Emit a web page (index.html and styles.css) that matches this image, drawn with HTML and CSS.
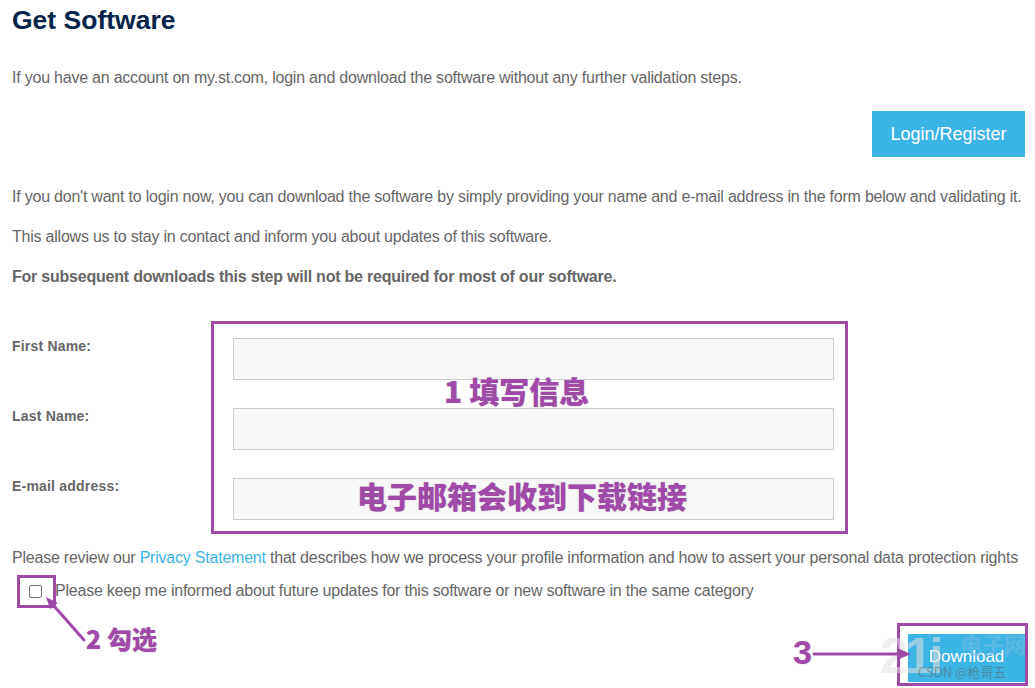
FILE: index.html
```html
<!DOCTYPE html>
<html>
<head>
<meta charset="utf-8">
<link rel="stylesheet" href="styles.css">
</head>
<body>
<div class="page">
  <h1 class="title">Get Software</h1>
  <p class="text p1">If you have an account on my.st.com, login and download the software without any further validation steps.</p>
  <div class="login-row"><button class="btn login">Login/Register</button></div>
  <p class="text p2">If you don't want to login now, you can download the software by simply providing your name and e-mail address in the form below and validating it.</p>
  <p class="text p3">This allows us to stay in contact and inform you about updates of this software.</p>
  <p class="text bold">For subsequent downloads this step will not be required for most of our software.</p>

  <div class="form">
    <div class="note-box box1"></div>
    <div class="note n1">1 填写信息</div>
    <div class="note n2">电子邮箱会收到下载链接</div>
    <div class="row"><label class="lbl">First Name:</label><div class="input"></div></div>
    <div class="row"><label class="lbl">Last Name:</label><div class="input"></div></div>
    <div class="row"><label class="lbl">E-mail address:</label><div class="input"></div></div>
  </div>

  <p class="text privacy">Please review our <a class="link">Privacy Statement</a> that describes how we process your profile information and how to assert your personal data protection rights</p>
  <div class="check-row">
    <span class="checkbox"></span>
    <span class="text check-text">Please keep me informed about future updates for this software or new software in the same category</span>
    <div class="note-box box2"></div>
  </div>

  <div class="bottom">
    <button class="btn download">Download</button>
    <div class="note-box box3"></div>
    <div class="wm wm21">21i</div>
    <div class="wm wmcn">电子网</div>
    <div class="wm wmcsdn">CSDN @枪哥五</div>
    <div class="note n3">3</div>
    <div class="note n4">2 勾选</div>
    <svg class="arrows" width="1035" height="110" viewBox="0 0 1035 110">
      <g stroke="#a04aa8" stroke-width="3" fill="none" stroke-linecap="round">
        <line x1="84" y1="60" x2="54" y2="26"/>
        <line x1="814" y1="74" x2="900" y2="74"/>
      </g>
      <polygon points="46,17 57.7,22.7 50.2,29.3" fill="#a04aa8"/>
      <polygon points="911,74 897,68 897,80" fill="#a04aa8"/>
    </svg>
  </div>
</div>
</body>
</html>
```
FILE: styles.css
```css
* { box-sizing: border-box; }
body {
  margin: 0;
  background: #fff;
  font-family: "Liberation Sans", Arial, sans-serif;
  color: #666;
}
.page {
  position: relative;
  width: 1035px;
  height: 688px;
  overflow: hidden;
  padding: 0 12px;
}
.title {
  margin: 0;
  padding-top: 4px;
  font-size: 26.5px;
  font-weight: bold;
  color: #03234b;
  line-height: 32px;
}
.text {
  font-size: 16px;
  line-height: 20px;
  letter-spacing: -0.22px;
  margin: 0;
  white-space: nowrap;
}
.p1 { margin-top: 32px; }
.login-row {
  display: flex;
  justify-content: flex-end;
  margin-top: 23px;
  margin-right: -2px;
}
.btn {
  border: none;
  background: #3cb4e5;
  color: #fff;
  font-family: "Liberation Sans", Arial, sans-serif;
  font-size: 18px;
  padding: 0;
}
.login { width: 153px; height: 46px; }
.p2 { margin-top: 30px; }
.p3 { margin-top: 20px; }
.bold { margin-top: 20px; font-weight: bold; }

.form {
  position: relative;
  margin-top: 51px;
  display: flex;
  flex-direction: column;
  gap: 28px;
}
.row {
  display: flex;
  align-items: flex-start;
  height: 42px;
}
.lbl {
  width: 221px;
  font-size: 14px;
  line-height: 16px;
  letter-spacing: 0.2px;
  font-weight: bold;
  color: #666;
  padding-top: 0;
}
.input {
  width: 601px;
  height: 42px;
  background: #f7f7f7;
  border: 1px solid #ccc;
}
.note-box {
  position: absolute;
  border: 3px solid #a04aa8;
}
.box1 { left: 199px; top: -17px; width: 637px; height: 213px; }
.note {
  position: absolute;
  color: #a04aa8;
  font-family: "Noto Sans CJK SC", "Liberation Sans", sans-serif;
  font-weight: 900;
  font-size: 30px;
  line-height: 30px;
  text-shadow: 0 0 2px #ddd, 0 0 1px #ccc;
  z-index: 3;
  white-space: nowrap;
}
.n1 { left: 432px; top: 37px; }
.n2 { left: 345px; top: 142px; }

.privacy { margin-top: 28px; }
.link { color: #3cb4e5; text-decoration: none; }
.check-row {
  position: relative;
  display: flex;
  align-items: center;
  gap: 13px;
  margin-top: 13px;
  padding-left: 17px;
  height: 20px;
}
.checkbox {
  width: 13px;
  height: 13px;
  border: 1px solid #767676;
  border-radius: 2px;
  background: #fff;
}
.box2 { left: 5px; top: -6px; width: 39px; height: 33px; }

.bottom {
  position: relative;
  height: 88px;
}
.download {
  position: absolute;
  left: 896px;
  top: 33px;
  width: 117px;
  height: 48px;
  font-size: 17px;
  padding-bottom: 2px;
}
.box3 { left: 885px; top: 22px; width: 131px; height: 63px; z-index: 2; }
.wm { position: absolute; z-index: 4; white-space: nowrap; }
.wm21 {
  left: 868px; top: 27px;
  font-family: "Liberation Sans", sans-serif;
  font-weight: bold;
  font-size: 50px;
  line-height: 56px;
  color: rgba(225,225,225,0.55);
  letter-spacing: -3px;
}
.wmcn {
  left: 948px; top: 29px;
  font-family: "Noto Sans CJK SC", sans-serif;
  font-weight: bold;
  font-size: 22px;
  line-height: 26px;
  color: rgba(120,190,230,0.55);
}
.wmcsdn {
  left: 906px; top: 63px;
  font-family: "Noto Sans CJK SC", sans-serif;
  font-size: 13px;
  line-height: 15px;
  color: rgba(90,90,90,0.5);
}
.n3 { left: 781px; top: 34px; font-family: "Liberation Sans", sans-serif; font-weight: bold; font-size: 34px; line-height: 34px; }
.n4 { left: 74px; top: 22px; font-size: 25px; }
.arrows { position: absolute; left: -12px; top: -21px; z-index: 5; }
```
